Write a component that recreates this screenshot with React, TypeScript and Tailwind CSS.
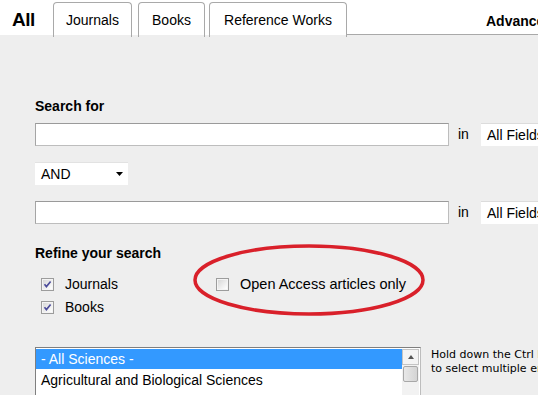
import React from "react";

function Check({ checked }: { checked: boolean }) {
  return (
    <svg width="13" height="13" viewBox="0 0 13 13" className="shrink-0">
      <defs>
        <linearGradient id={checked ? "gc" : "gu"} x1="0" y1="0" x2="1" y2="1">
          <stop offset="0" stopColor="#d8d8d8" />
          <stop offset="1" stopColor="#ffffff" />
        </linearGradient>
      </defs>
      <rect x="0.5" y="0.5" width="12" height="12" fill="#f4f4f4" stroke="#9c9c9c" />
      <rect x="2" y="2" width="9" height="9" fill={`url(#${checked ? "gc" : "gu"})`} />
      {checked && (
        <path d="M3.5 6.2 L5.4 8.6 L9.6 3.4" fill="none" stroke="#4b4b9a" strokeWidth="1.6" />
      )}
    </svg>
  );
}

function Tab({ label, w }: { label: string; w: string }) {
  return (
    <div
      className={`${w} shrink-0 h-[33px] pt-[3px] relative bg-white border border-[#a9a9a9] border-b-0 rounded-t-[4px] flex items-center justify-center text-[14px] text-black`}
    >
      {label}
      <div className="absolute -left-px -bottom-[2px] w-px h-[3px] bg-[#a9a9a9]" />
      <div className="absolute -right-px -bottom-[2px] w-px h-[3px] bg-[#a9a9a9]" />
    </div>
  );
}

function TextInput() {
  return (
    <div className="w-[414px] shrink-0 h-[23px] bg-white border border-[#bdbdbd] border-t-[#9a9a9a] border-l-[#a5a5a5]" />
  );
}

function FieldsSelect() {
  return (
    <div className="w-[80px] shrink-0 h-[23px] bg-white flex items-center pl-[6px] text-[14px] whitespace-nowrap overflow-hidden border-t border-[#dcdcdc]">
      All Fields
    </div>
  );
}

export default function App() {
  return (
    <div
      className="w-[538px] h-[395px] overflow-hidden bg-[#eeeeee] text-black"
      style={{ fontFamily: '"Liberation Sans", Arial, sans-serif' }}
    >
      {/* Tab strip */}
      <div className="h-[35px] bg-white flex items-end">
        <div className="w-[53px] shrink-0 h-[35px] pl-[12px] flex items-center pt-[5px] text-[19px] font-bold tracking-[-0.5px]">
          All
        </div>
        <Tab label="Journals" w="w-[79px]" />
        <div className="w-[6px] shrink-0" />
        <Tab label="Books" w="w-[67px]" />
        <div className="w-[4px] shrink-0" />
        <Tab label="Reference Works" w="w-[138px]" />
        <div className="flex-1 min-w-0 h-[35px] border-b border-[#a9a9a9] flex items-center pl-[139px] pt-[8px] text-[14px] font-bold whitespace-nowrap overflow-hidden">
          Advanced Search
        </div>
      </div>

      {/* Body */}
      <div className="relative pl-[35px]">
        <div className="pt-[64px] text-[14px] font-bold leading-[15px]">Search for</div>

        <div className="mt-[9px] flex items-center">
          <TextInput />
          <span className="ml-[9px] w-[23px] shrink-0 text-[14px]">in</span>
          <FieldsSelect />
        </div>

        <div className="mt-[16px] w-[93px] h-[23px] bg-white border-t border-[#e2e2e2] flex items-center pl-[6px] pr-[5px] text-[14px]">
          <span className="flex-1">AND</span>
          <svg width="7" height="4" viewBox="0 0 7 4">
            <path d="M0 0 H7 L3.5 4 Z" fill="#000" />
          </svg>
        </div>

        <div className="mt-[16px] flex items-center">
          <TextInput />
          <span className="ml-[9px] w-[23px] shrink-0 text-[14px]">in</span>
          <FieldsSelect />
        </div>

        <div className="mt-[22px] text-[14px] font-bold leading-[15px]">Refine your search</div>

        <div className="mt-[17px] flex">
          <div className="w-[181px] shrink-0 pl-[6px] flex flex-col gap-[10px]">
            <div className="flex items-center h-[13px] gap-[11px] text-[14px]">
              <Check checked />
              <span>Journals</span>
            </div>
            <div className="flex items-center h-[13px] gap-[11px] text-[14px]">
              <Check checked />
              <span>Books</span>
            </div>
          </div>
          <div className="flex items-center h-[13px] gap-[11px] text-[14.5px] whitespace-nowrap">
            <Check checked={false} />
            <span>Open Access articles only</span>
          </div>
        </div>

        <div className="mt-[33px] flex items-start">
          <div className="w-[386px] shrink-0 h-[60px] bg-white border border-[#7f7f7f] border-r-[#bdbdbd] flex">
            <div className="flex-1 text-[14px] leading-[20px]">
              <div className="mt-px bg-[#3399ff] text-white pl-[5px] h-[20px] flex items-center">- All Sciences -</div>
              <div className="pl-[5px] h-[20px] flex items-center mt-px">Agricultural and Biological Sciences</div>
            </div>
            <div className="w-[17px] mr-px mt-px flex flex-col bg-[#f2f2f2]">
              <div className="h-[16px] border border-[#c4c4c4] bg-[#f4f4f4] flex items-center justify-center">
                <svg width="6" height="4" viewBox="0 0 6 4">
                  <path d="M0 4 L3 0 L6 4 Z" fill="#555" />
                </svg>
              </div>
              <div className="mt-px mx-px h-[16px] border border-[#a8a8a8] rounded-[2px] bg-gradient-to-r from-[#e8e8e8] to-[#d4d4d4]" />
            </div>
          </div>
          <div
            className="ml-[10px] mt-px text-[11px] leading-[14px] whitespace-nowrap"
            style={{ fontFamily: '"DejaVu Sans", Verdana, sans-serif' }}
          >
            <div>Hold down the Ctrl key</div>
            <div>to select multiple entries</div>
          </div>
        </div>

        {/* Red annotation ellipse */}
        <svg
          className="absolute left-[192px] top-[208px] pointer-events-none"
          width="234"
          height="74"
          viewBox="0 0 234 74"
        >
          <ellipse cx="117" cy="37" rx="114" ry="34" fill="none" stroke="#d9202a" strokeWidth="3.5" />
        </svg>
      </div>
    </div>
  );
}
